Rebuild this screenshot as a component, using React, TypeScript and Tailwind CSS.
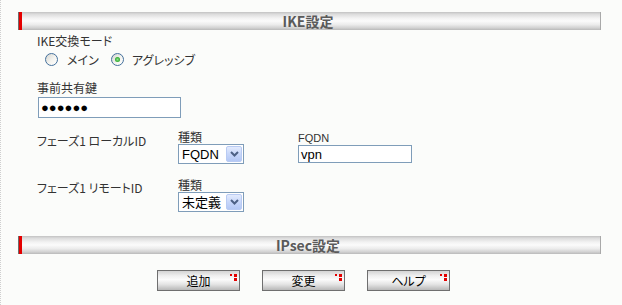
import React from "react";

const jp = "font-['Noto_Sans_CJK_JP',sans-serif] [font-feature-settings:'palt']";
const latin = "font-['Liberation_Sans','Noto_Sans_CJK_JP',sans-serif]";

function SectionHeader({ title }: { title: string }) {
  return (
    <div className="ml-[17px] w-[583px] h-[18px] flex border-r border-[#a9a9a9] bg-[linear-gradient(to_bottom,#c2c2c2_0%,#dcdcdc_12%,#f3f3f3_35%,#fbfbfb_50%,#ececec_70%,#d2d2d2_88%,#b9b9b9_100%)]">
      <div className="w-[1px] bg-[#6e6e6e]" />
      <div className="w-[3px] bg-[#e40000]" />
      <div className="flex-1 flex items-center justify-center pr-[6px] text-[14px] font-bold text-[#5a5a5a] leading-none">
        {title}
      </div>
    </div>
  );
}

function Radio({ checked }: { checked?: boolean }) {
  return (
    <span className="w-[13px] h-[13px] rounded-full border border-[#44709c] bg-[linear-gradient(135deg,#d6d6d0_0%,#f4f4f0_55%,#ffffff_100%)] flex items-center justify-center">
      {checked && (
        <span className="w-[5px] h-[5px] rounded-full bg-[radial-gradient(circle,#8ee08e_0%,#2aa82a_70%)]" />
      )}
    </span>
  );
}

function Select({ value }: { value: string }) {
  return (
    <div className="w-[66px] h-[20px] border border-[#7f9db9] bg-white flex items-center">
      <span className={`flex-1 pl-[3px] text-[13px] leading-none text-black ${latin}`}>{value}</span>
      <span className="w-[16px] h-[16px] mr-[1px] rounded-[2px] border border-[#b9cbf3] bg-[linear-gradient(to_bottom,#e3ebfd_0%,#c8d7fa_50%,#b4c8f5_100%)] flex items-center justify-center">
        <svg width="9" height="6" viewBox="0 0 9 6">
          <path d="M1 1 L4.5 4.5 L8 1" fill="none" stroke="#4d6185" strokeWidth="2" />
        </svg>
      </span>
    </div>
  );
}

function RedMark() {
  return (
    <svg width="7" height="7" viewBox="0 0 7 7" className="absolute top-[3px] right-[2px]">
      <rect x="0" y="0" width="2" height="2" fill="#e40000" />
      <rect x="4" y="0" width="3" height="3" fill="#e40000" />
      <rect x="4" y="4" width="3" height="3" fill="#e40000" />
    </svg>
  );
}

function Btn({ label }: { label: string }) {
  return (
    <button className="relative w-[83px] h-[21px] border border-[#6f6f6f] bg-[linear-gradient(to_bottom,#d4d4d4_0%,#efefef_25%,#fbfbfb_45%,#e4e4e4_70%,#b8b8b8_100%)] flex items-center justify-center text-[12px] leading-none text-black">
      {label}
      <RedMark />
    </button>
  );
}

export default function App() {
  return (
    <div className={`w-[622px] h-[305px] bg-[#fbfcfa] border-l border-dotted border-[#cfcfcf] flex flex-col text-[12px] text-[#333] ${jp}`}>
      <div className="mt-[12px]">
        <SectionHeader title="IKE設定" />
      </div>

      <div className="ml-[36px] mt-[4px] h-[14px] leading-[14px]">IKE交換モード</div>

      <div className="ml-[44px] mt-[5px] flex items-center h-[13px]">
        <div className="w-[66px] flex items-center">
          <Radio />
          <span className="ml-[9px] leading-[14px]">メイン</span>
        </div>
        <div className="flex items-center">
          <Radio checked />
          <span className="ml-[8px] leading-[14px]">アグレッシブ</span>
        </div>
      </div>

      <div className="ml-[36px] mt-[15px] h-[14px] leading-[14px]">事前共有鍵</div>
      <div className="ml-[37px] mt-[2px] w-[143px] h-[21px] border border-[#7f9db9] bg-white flex items-center pl-[2px]">
        <span className={`text-[13px] leading-none text-black tracking-[0px] ${latin}`}>●●●●●●</span>
      </div>

      <div className="mt-[12px] flex">
        <div className="ml-[36px] w-[141px] mt-[4px] leading-[14px]">フェーズ1 ローカルID</div>
        <div className="w-[120px] flex flex-col">
          <div className="h-[14px] leading-[14px]">種類</div>
          <Select value="FQDN" />
        </div>
        <div className="flex flex-col">
          <div className={`h-[14px] leading-[14px] mt-[1px] text-[11px] ${latin}`}>FQDN</div>
          <div className="w-[114px] h-[18px] border border-[#7f9db9] bg-white flex items-center pl-[2px]">
            <span className={`text-[13px] leading-none text-black ${latin}`}>vpn</span>
          </div>
        </div>
      </div>

      <div className="mt-[14px] flex">
        <div className="ml-[36px] w-[141px] mt-[3px] leading-[14px]">フェーズ1 リモートID</div>
        <div className="flex flex-col">
          <div className="h-[14px] leading-[14px]">種類</div>
          <Select value="未定義" />
        </div>
      </div>

      <div className="mt-[24px]">
        <SectionHeader title="IPsec設定" />
      </div>

      <div className="mt-[16px] ml-[156px] flex gap-[22px]">
        <Btn label="追加" />
        <Btn label="変更" />
        <Btn label="ヘルプ" />
      </div>
    </div>
  );
}
